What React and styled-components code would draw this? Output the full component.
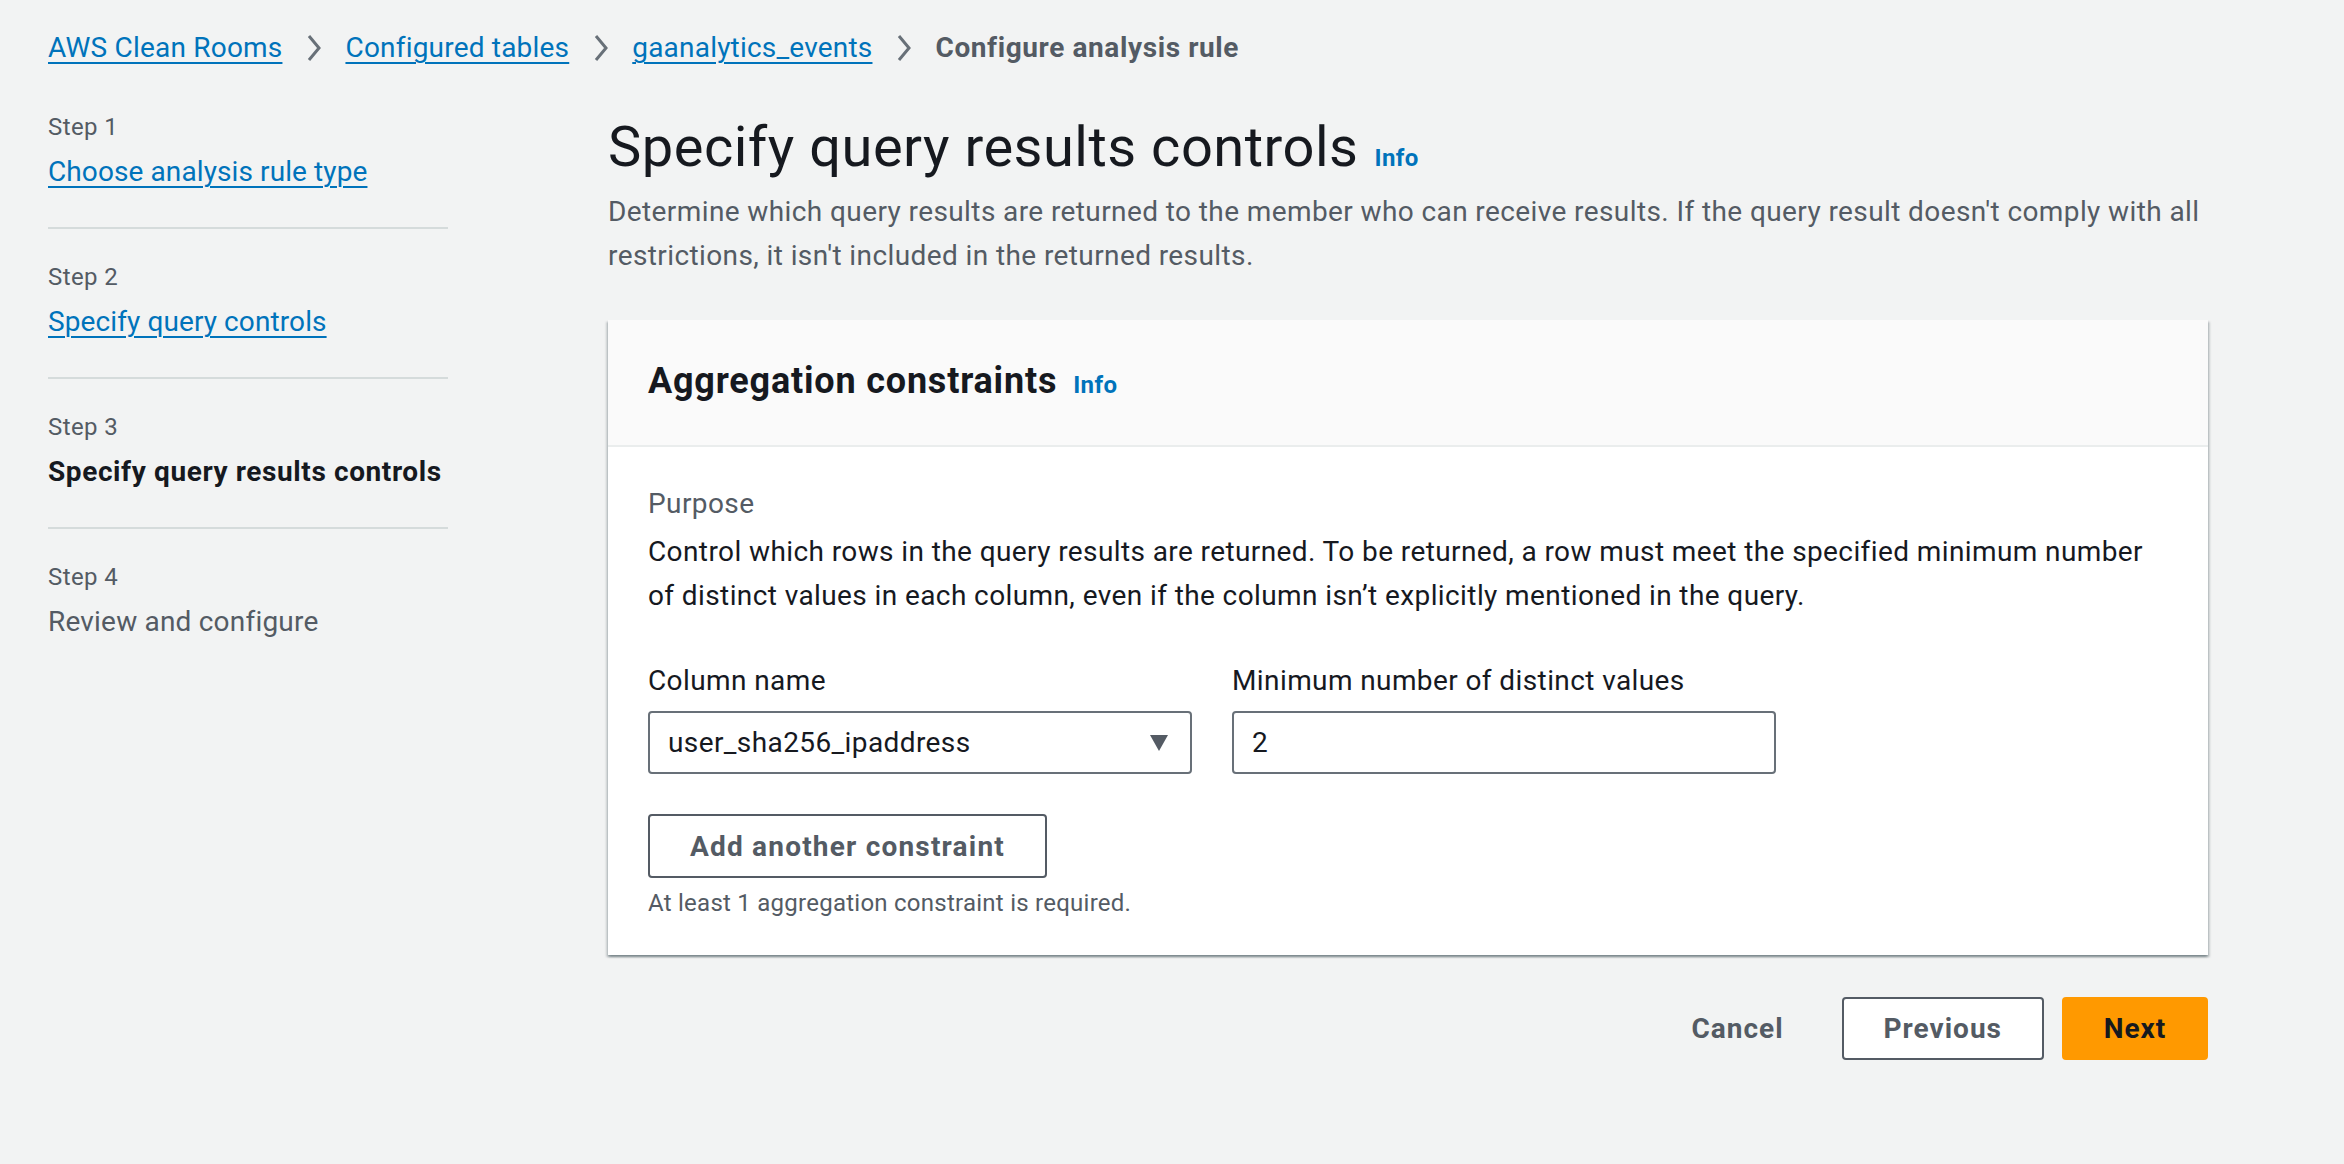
import React from "react";
import styled, { createGlobalStyle } from "styled-components";

const Global = createGlobalStyle`
  html, body { margin: 0; padding: 0; background: #f2f3f3; }
  body { font-family: Roboto, "Noto Sans", Arial, sans-serif; color: #16191f; font-size: 28px; letter-spacing: 0.4px; }
  * { box-sizing: border-box; }
`;

const Page = styled.div`
  min-height: 1164px;
  padding: 28px 136px 0 48px;
`;

const Breadcrumbs = styled.nav`
  display: flex;
  align-items: center;
  height: 40px;
  line-height: 40px;
  font-size: 28px;
`;

const Crumb = styled.a`
  color: #0073bb;
  letter-spacing: 0.2px;
  text-decoration: underline;
  text-underline-offset: 5px;
  text-decoration-thickness: 2px;
  cursor: pointer;
`;

const CurrentCrumb = styled.span`
  color: #545b64;
  font-weight: 700;
  letter-spacing: 0.6px;
`;

const Sep = styled.span`
  display: inline-flex;
  align-items: center;
  margin: 0 24px 0 25px;
`;

const Layout = styled.div`
  display: flex;
  align-items: flex-start;
  gap: 160px;
`;

const SideNav = styled.ol`
  list-style: none;
  margin: 11px 0 0;
  padding: 0;
  width: 400px;
  flex: none;
`;

const Step = styled.li`
  padding: 30px 0 33px;
  border-bottom: ${(p) => (p.$last ? "none" : "2px solid #d5dbdb")};
`;

const StepLabel = styled.div`
  font-size: 24px;
  line-height: 36px;
  color: #545b64;
  margin-bottom: 5px;
`;

const StepLink = styled.a`
  display: block;
  font-size: 28px;
  line-height: 44px;
  color: #0073bb;
  letter-spacing: 0.1px;
  text-decoration: underline;
  text-underline-offset: 5px;
  text-decoration-thickness: 2px;
  cursor: pointer;
`;

const StepText = styled.div`
  font-size: 28px;
  line-height: 44px;
  color: ${(p) => (p.$active ? "#16191f" : "#545b64")};
  font-weight: ${(p) => (p.$active ? 700 : 400)};
  letter-spacing: ${(p) => (p.$active ? "0.6px" : "0.2px")};
`;

const Main = styled.main`
  width: 1600px;
  flex: none;
  margin-top: 43px;
`;

const H1 = styled.h1`
  margin: 0;
  font-size: 56px;
  line-height: 72px;
  font-weight: 400;
  color: #16191f;
  letter-spacing: 0.5px;
`;

const InfoLink = styled.a`
  margin-left: 16px;
  font-size: 24px;
  line-height: 24px;
  font-weight: 700;
  letter-spacing: 0.4px;
  color: #0073bb;
  cursor: pointer;
`;

const Description = styled.p`
  margin: 7px 0 0;
  font-size: 28px;
  line-height: 44px;
  color: #545b64;
`;

const Card = styled.section`
  margin-top: 42px;
  background: #fff;
  box-shadow: 0 2px 2px 0 rgba(0, 28, 36, 0.3), 2px 2px 2px 0 rgba(0, 28, 36, 0.15),
    -2px 2px 2px 0 rgba(0, 28, 36, 0.15);
`;

const CardHeader = styled.header`
  background: #fafafa;
  border-bottom: 2px solid #eaeded;
  padding: 36px 40px 39px;
`;

const H2 = styled.h2`
  margin: 0;
  font-size: 36px;
  line-height: 50px;
  font-weight: 700;
  letter-spacing: 0.8px;
`;

const CardBody = styled.div`
  padding: 35px 40px 36px;
`;

const FieldLabel = styled.div`
  font-size: 28px;
  line-height: 44px;
  color: ${(p) => (p.$muted ? "#545b64" : "#16191f")};
`;

const BodyText = styled.p`
  margin: 4px 0 0;
  font-size: 28px;
  line-height: 44px;
  color: #16191f;
`;

const FieldsRow = styled.div`
  display: grid;
  grid-template-columns: 544px 544px;
  gap: 40px;
  margin-top: 41px;
`;

const Field = styled.div`
  display: flex;
  flex-direction: column;
  gap: 8px;
`;

const Control = styled.div`
  height: 63px;
  border: 2px solid #687078;
  border-radius: 4px;
  background: #fff;
  display: flex;
  align-items: center;
  justify-content: space-between;
  padding: 0 22px 0 18px;
  font-size: 28px;
  color: #16191f;
`;

const SecondaryButton = styled.button`
  height: ${(p) => (p.$tall ? "64px" : "63px")};
  padding: 0 40px;
  border: 2px solid #545b64;
  border-radius: 4px;
  background: #fff;
  color: #545b64;
  font-family: inherit;
  font-size: 28px;
  font-weight: 700;
  letter-spacing: ${(p) => (p.$tall ? "1.2px" : "1px")};
  cursor: pointer;
`;

const AddRow = styled.div`
  margin-top: 40px;
`;

const Helper = styled.div`
  margin-top: 9px;
  font-size: 24px;
  line-height: 32px;
  letter-spacing: 0.25px;
  color: #545b64;
`;

const Actions = styled.div`
  display: flex;
  justify-content: flex-end;
  align-items: center;
  gap: 18px;
  margin-top: 42px;
`;

const LinkButton = styled.button`
  height: 63px;
  padding: 0 40px;
  border: none;
  background: transparent;
  color: #545b64;
  font-family: inherit;
  font-size: 28px;
  font-weight: 700;
  letter-spacing: 1px;
  cursor: pointer;
`;

const PrimaryButton = styled.button`
  height: 63px;
  width: 146px;
  border: 2px solid #ff9900;
  border-radius: 4px;
  background: #ff9900;
  color: #16191f;
  font-family: inherit;
  font-size: 28px;
  font-weight: 700;
  letter-spacing: 1px;
  cursor: pointer;
`;

const Chevron = () => (
  <svg width="14" height="28" viewBox="0 0 14 28" fill="none">
    <path d="M2 2 L12 14 L2 26" stroke="#687078" strokeWidth="3" strokeLinejoin="miter" />
  </svg>
);

const Caret = () => (
  <svg width="18" height="16" viewBox="0 0 18 16">
    <path d="M0 0 H18 L9 16 Z" fill="#545b64" />
  </svg>
);

export default function App() {
  return (
    <>
      <Global />
      <Page>
        <Breadcrumbs>
          <Crumb>AWS Clean Rooms</Crumb>
          <Sep><Chevron /></Sep>
          <Crumb>Configured tables</Crumb>
          <Sep><Chevron /></Sep>
          <Crumb>gaanalytics_events</Crumb>
          <Sep><Chevron /></Sep>
          <CurrentCrumb>Configure analysis rule</CurrentCrumb>
        </Breadcrumbs>
        <Layout>
          <SideNav>
            <Step>
              <StepLabel>Step 1</StepLabel>
              <StepLink>Choose analysis rule type</StepLink>
            </Step>
            <Step>
              <StepLabel>Step 2</StepLabel>
              <StepLink>Specify query controls</StepLink>
            </Step>
            <Step>
              <StepLabel>Step 3</StepLabel>
              <StepText $active>Specify query results controls</StepText>
            </Step>
            <Step $last>
              <StepLabel>Step 4</StepLabel>
              <StepText>Review and configure</StepText>
            </Step>
          </SideNav>
          <Main>
            <H1>
              Specify query results controls<InfoLink>Info</InfoLink>
            </H1>
            <Description>
              Determine which query results are returned to the member who can receive results. If the query result doesn't comply with all restrictions, it isn't included in the returned results.
            </Description>
            <Card>
              <CardHeader>
                <H2>
                  Aggregation constraints<InfoLink>Info</InfoLink>
                </H2>
              </CardHeader>
              <CardBody>
                <FieldLabel $muted>Purpose</FieldLabel>
                <BodyText>
                  Control which rows in the query results are returned. To be returned, a row must meet the specified minimum number of distinct values in each column, even if the column isn’t explicitly mentioned in the query.
                </BodyText>
                <FieldsRow>
                  <Field>
                    <FieldLabel>Column name</FieldLabel>
                    <Control>
                      <span>user_sha256_ipaddress</span>
                      <Caret />
                    </Control>
                  </Field>
                  <Field>
                    <FieldLabel>Minimum number of distinct values</FieldLabel>
                    <Control>
                      <span>2</span>
                    </Control>
                  </Field>
                </FieldsRow>
                <AddRow>
                  <SecondaryButton $tall>Add another constraint</SecondaryButton>
                </AddRow>
                <Helper>At least 1 aggregation constraint is required.</Helper>
              </CardBody>
            </Card>
            <Actions>
              <LinkButton>Cancel</LinkButton>
              <SecondaryButton>Previous</SecondaryButton>
              <PrimaryButton>Next</PrimaryButton>
            </Actions>
          </Main>
        </Layout>
      </Page>
    </>
  );
}
